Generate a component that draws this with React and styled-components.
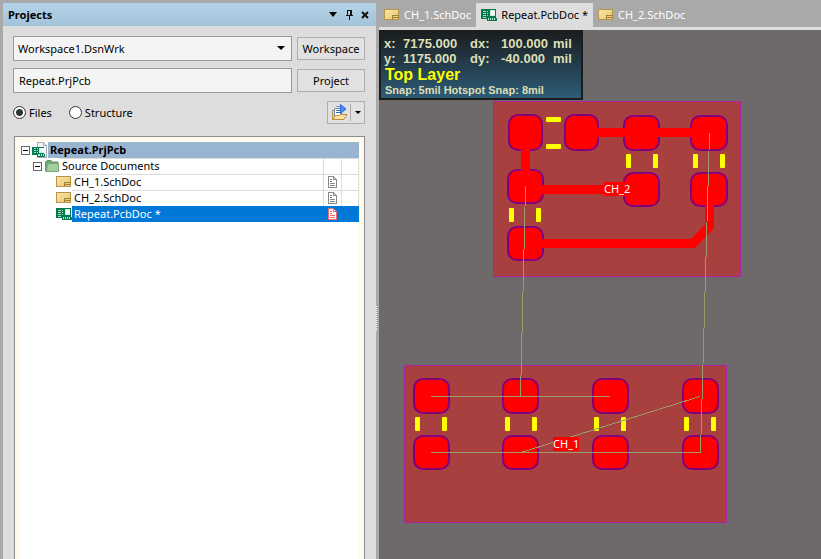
import React, { useState } from "react";
import styled, { createGlobalStyle, css } from "styled-components";

const GlobalStyle = createGlobalStyle`
  *, *::before, *::after { box-sizing: border-box; }
  body { margin: 0; background: #a9a9a9; }
  body, button, input, select {
    font: 11px/16px "Noto Sans", "Open Sans", sans-serif;
    color: #000;
  }
`;

const Shell = styled.div`
  display: flex;
  min-height: 100vh;
  padding: 3px 0 0 3px;
  background: #a9a9a9;
`;

const Panel = styled.aside`
  flex: 0 0 373px;
  display: flex;
  flex-direction: column;
  background: #dddddd;
`;

const PanelHeader = styled.header`
  display: flex;
  align-items: center;
  height: 23px;
  padding: 0 3px 0 5px;
  background: linear-gradient(#b5d3e8, #a3c3d9);
`;

const PanelTitle = styled.h1`
  flex: 1;
  margin: 0;
  font-size: 11px;
  line-height: 16px;
`;

const HeaderButton = styled.button`
  display: flex;
  justify-content: center;
  align-items: center;
  width: 16px;
  height: 16px;
  padding: 0;
  border: 0;
  background: none;
`;

const Controls = styled.form`
  display: grid;
  grid-template-columns: 1fr 68px;
  gap: 7px 5px;
  padding: 10px 11px 0 10px;
`;

const fieldBox = css`
  width: 100%;
  height: 25px;
  border: 1px solid #9a9a9a;
  border-radius: 0;
  background: #f4f4f4;
`;

const SelectWrap = styled.div`
  position: relative;
  svg {
    position: absolute;
    right: 7px;
    top: 10px;
    pointer-events: none;
  }
`;

const WorkspaceSelect = styled.select`
  ${fieldBox}
  padding: 0 24px 0 4px;
  appearance: none;
`;

const ProjectInput = styled.input`
  ${fieldBox}
  padding: 0 5px;
`;

const PushButton = styled.button`
  align-self: center;
  height: 23px;
  padding: 0;
  border: 1px solid #adadad;
  background: #e1e1e1;
`;

const ViewOptions = styled.div`
  display: flex;
  align-items: center;
  gap: 17px;
  height: 23px;
  padding: 0 11px 0 10px;
  margin-top: 8px;
`;

const RadioLabel = styled.label`
  display: flex;
  align-items: center;
  gap: 3px;
`;

const Radio = styled.input`
  appearance: none;
  width: 13px;
  height: 13px;
  margin: 0;
  border: 1px solid #333;
  border-radius: 50%;
  background: #fff;
  &:checked {
    background: radial-gradient(circle, #333 3px, #fff 4px);
  }
`;

const SplitButton = styled.div`
  display: flex;
  margin-left: auto;
  width: 38px;
  height: 23px;
  border: 1px solid #adadad;
  background: #e1e1e1;
`;

const SplitPart = styled.button`
  display: flex;
  align-items: center;
  justify-content: center;
  flex: ${(p) => (p.$main ? "1" : "0 0 14px")};
  padding: 0;
  border: 0;
  border-left: ${(p) => (p.$main ? "0" : "1px solid #adadad")};
  margin: ${(p) => (p.$main ? "0" : "2px 0")};
  background: none;
`;

const TreeFrame = styled.section`
  flex: 1;
  display: flex;
  margin: 12px 11px 0 11px;
  padding: 5px 5px 0;
  border: 1px solid #8c8c8c;
  border-bottom: 0;
  background: #fff9ee;
`;

const TreeBody = styled.div`
  flex: 1;
  background: #fff;
`;

const TreeTable = styled.table`
  width: 100%;
  border-collapse: collapse;
  table-layout: fixed;
`;

const NameCol = styled.col``;
const StateCol = styled.col`
  width: ${(p) => p.$width}px;
`;

const tones = { project: "#99b4d1", selected: "#0078d7" };

const Row = styled.tr`
  height: 16px;
  color: ${(p) => (p.$tone === "selected" ? "#fff" : "#000")};
  font-weight: ${(p) => (p.$tone === "project" ? "bold" : "normal")};
`;

const Cell = styled.td`
  height: 16px;
  padding: 0;
  background: ${(p) => tones[p.$tone] || "#fff"};
  box-shadow: ${(p) => (p.$tone ? "none" : "inset 1px 1px #dcdcdc")};
  &:last-child {
    box-shadow: ${(p) => (p.$tone ? "none" : "inset 1px 1px #dcdcdc, inset -1px 0 #dcdcdc")};
  }
  svg { display: block; margin: 0 auto; }
`;

const NameCell = styled.td`
  padding: 0;
`;

const NameLine = styled.div`
  display: flex;
  align-items: stretch;
  height: 16px;
  padding-left: ${(p) => p.$depth * 12 + 1}px;
`;

const Toggle = styled.button`
  align-self: center;
  display: flex;
  width: 9px;
  height: 9px;
  margin-right: 2px;
  padding: 0;
  border: 0;
  background: none;
`;

const ToggleGap = styled.span`
  width: 11px;
`;

const RowText = styled.span`
  flex: 1;
  padding-left: 2px;
  background: ${(p) => tones[p.$tone] || "#fff"};
  box-shadow: ${(p) => (p.$tone ? "none" : "inset 0 1px #dcdcdc")};
  white-space: nowrap;
`;

const Splitter = styled.div`
  flex: 0 0 3px;
  display: flex;
  align-items: center;
  margin-top: 75px;
`;

const Grip = styled.div`
  width: 1px;
  height: 26px;
  background: repeating-linear-gradient(#fff 0 1px, #a9a9a9 1px 2px);
`;

const Editor = styled.main`
  flex: 1;
  min-width: 0;
  display: flex;
  flex-direction: column;
`;

const TabBar = styled.nav`
  display: flex;
  height: 27px;
  border-bottom: 3px solid #dddddd;
`;

const Tab = styled.button`
  display: flex;
  align-items: center;
  gap: 4px;
  padding: 0 5px;
  border: 0;
  background: ${(p) => (p.$active ? "#dddddd" : "transparent")};
  color: ${(p) => (p.$active ? "#000" : "#fff")};
  white-space: nowrap;
`;

const Canvas = styled.div`
  position: relative;
  flex: 1;
  display: flex;
  overflow: hidden;
  background: #6e6a69;
`;

const Board = styled.svg`
  flex: 1;
  font: 11px "Noto Sans", sans-serif;
`;

const Hud = styled.div`
  position: absolute;
  top: 0;
  left: 0;
  width: 204px;
  padding: 6px 0 0 3px;
  border: 2px solid #1a1c1d;
  border-top: 0;
  background: linear-gradient(#1a1c1d, #2d5c78);
  color: #dedfb5;
  font: bold 13px/15px "Liberation Sans", Arial, sans-serif;
`;

const HudGrid = styled.div`
  display: grid;
  grid-template-columns: 19px 67px 31px 52px auto;
`;

const HudLayer = styled.div`
  font-size: 16px;
  line-height: 17px;
  color: #ffff00;
  padding-left: 1px;
`;

const HudSnap = styled.div`
  font-size: 11px;
  line-height: 15px;
  padding-left: 1px;
`;

const Caret = ({ w = 7, h = 4 }) => (
  <svg width={w} height={h} viewBox="0 0 8 4" preserveAspectRatio="none" aria-hidden="true">
    <path d="M0 0h8L4 4z" fill="#000" />
  </svg>
);

const PinIcon = () => (
  <svg width="9" height="10" viewBox="0 0 9 10" shapeRendering="crispEdges" aria-hidden="true">
    <path d="M2 0h5v5h1v1H5v4H4V6H1V5h1zM3 1v4h2V1z" fill="#111" fillRule="evenodd" />
  </svg>
);

const CloseIcon = () => (
  <svg width="8" height="8" viewBox="0 0 8 8" aria-hidden="true">
    <path d="M1 1l6 6M7 1L1 7" stroke="#111" strokeWidth="2" />
  </svg>
);

const MinusBox = () => (
  <svg width="9" height="9" viewBox="0 0 9 9" shapeRendering="crispEdges" aria-hidden="true">
    <path d="M.5.5h8v8h-8z" fill="#fff" stroke="#666" />
    <path d="M2 4h5v1H2z" fill="#000" />
  </svg>
);

const SchIcon = () => (
  <svg width="16" height="16" viewBox="0 0 16 16" shapeRendering="crispEdges" aria-hidden="true">
    <defs>
      <linearGradient id="sheet" x1="0" y1="0" x2="1" y2="1">
        <stop offset="0" stopColor="#fbe7ae" />
        <stop offset="1" stopColor="#e8c766" />
      </linearGradient>
    </defs>
    <path d="M.5 2.500h14v10H.5z" fill="url(#sheet)" stroke="#b4954a" />
    <path d="M8.500 12.500v-4h6M8.500 10.500h6" fill="none" stroke="#a08138" />
  </svg>
);

const PcbShape = () => (
  <>
    <path d="M0 2h15v9h1v3H6v-2H0z" fill="#067a4c" />
    <path d="M2 4h3v1H2zM2 6h3v1H2zM2 8h3v1H2zM2 10h3v1H2zM6 4h1v1H6zM6 6h1v1H6zM6 8h1v1H6z" fill="#a5dcc4" />
    <path d="M9 3h5v6H9z" fill="#cfeadd" />
    <path d="M10 4h4v4h-4z" fill="#f4fbf7" />
    <path d="M7 11h1v2H7zM9 11h1v2H9zM11 11h1v2h-1zM13 11h1v2h-1z" fill="#b5e3cf" />
  </>
);

const PcbIcon = () => (
  <svg width="16" height="16" viewBox="0 0 16 16" shapeRendering="crispEdges" aria-hidden="true">
    <PcbShape />
  </svg>
);

const ProjectIcon = () => (
  <svg width="16" height="16" viewBox="0 0 16 16" shapeRendering="crispEdges" aria-hidden="true">
    <path d="M5.500 .5h6l3 3v12h-9z" fill="#f4f5fb" stroke="#a7aec4" />
    <path d="M11.500 .5v3h3" fill="none" stroke="#a7aec4" />
    <g transform="translate(0 3) scale(.83 .86)">
      <PcbShape />
    </g>
  </svg>
);

const FolderIcon = () => (
  <svg width="16" height="16" viewBox="0 0 16 16" aria-hidden="true">
    <path d="M1.500 13V4l1.500-1.500h4L8.500 4H14v9.500H2z" fill="#6fa873" stroke="#6a8f6c" />
    <path d="M2.500 13.500L3.500 5.500h11v8z" fill="#a3cf9f" stroke="#7ca57b" />
  </svg>
);

const PageIcon = ({ color = "#8a8a8a" }) => (
  <svg width="9" height="12" viewBox="0 0 9 12" shapeRendering="crispEdges" aria-hidden="true">
    <path d="M.5.5h5l3 3v8h-8z" fill="#fff" stroke={color} />
    <path d="M5 1h1v3H5zM6 3h2v1H6zM2 3h2v1H2zM2 5h2v1H2zM2 7h5v1H2zM2 9h5v1H2z" fill={color} />
  </svg>
);

const OpenIcon = () => (
  <svg width="17" height="17" viewBox="0 0 17 17" aria-hidden="true">
    <path d="M1.500 15.500v-9h3v5z" fill="#f5d893" stroke="#b98f42" />
    <path d="M3.500 4.500h7v8h-7z" fill="#fff" stroke="#6e8fb5" />
    <path d="M5.500 2.500h4v8" fill="none" stroke="#6e8fb5" />
    <path d="M5 6.500h4M5 8.500h5" stroke="#3b6fb0" />
    <path d="M9.500 .5L15 5 9.500 9.500z" fill="#4a90f2" stroke="#2b6ad8" />
    <path d="M1.500 15.500l3-4h4l1-1h6.500l-3 5z" fill="#fbdfa3" stroke="#b98f42" />
  </svg>
);

const rows = [
  { name: "Repeat.PrjPcb", depth: 0, icon: ProjectIcon, toggle: true, tone: "project" },
  { name: "Source Documents", depth: 1, icon: FolderIcon, toggle: true },
  { name: "CH_1.SchDoc", depth: 2, icon: SchIcon, state: "#8a8a8a" },
  { name: "CH_2.SchDoc", depth: 2, icon: SchIcon, state: "#8a8a8a" },
  { name: "Repeat.PcbDoc *", depth: 2, icon: PcbIcon, state: "#ee6a6a", tone: "selected" },
];

const tabs = [
  { name: "CH_1.SchDoc", icon: SchIcon },
  { name: "Repeat.PcbDoc *", icon: PcbIcon, active: true },
  { name: "CH_2.SchDoc", icon: SchIcon },
];

// Each pad is left, top, width, height.
const pads = [
  [130, 85, 33, 35], [186, 85, 33, 35], [245, 86, 35, 34], [312, 86, 36, 34],
  [129, 140, 35, 33], [245, 143, 35, 33], [312, 143, 36, 33], [129, 197, 35, 33],
  ...[35, 124, 214, 304].flatMap((x) => [[x, 349, 35, 34], [x, 406, 35, 33]]),
];

const silk = [
  [247, 124], [274, 124], [314, 124], [341, 124], [130, 178], [157, 178],
  ...[36, 63, 126, 153, 215, 242, 305, 332].map((x) => [x, 387]),
];

function PcbDrawing() {
  return (
    <Board role="img" aria-label="PCB layout with rooms CH_1 and CH_2">
      <g fill="#a84040" stroke="#b023a0" shapeRendering="crispEdges">
        <path d="M114.500 71.500h247v175h-247z" />
        <path d="M25.500 335.500h322v157h-322z" />
      </g>
      <g fill="#ff0000" stroke="#80007f" strokeWidth="2">
        {pads.map(([x, y, w, h]) => (
          <rect key={`${x}-${y}`} x={x} y={y} width={w} height={h} rx="9" />
        ))}
      </g>
      <g fill="none" stroke="#ff0000" strokeWidth="9">
        <path d="M202 102.500h128M146.500 102v55M146 159.500h116M146 213.500h168l16.500-17v-37" />
      </g>
      <g fill="#ffff00">
        {silk.map(([x, y]) => (
          <rect key={`${x}-${y}`} x={x} y={y} width="5" height="14" rx="1" />
        ))}
        <rect x="167" y="87" width="15" height="5" rx="1" />
        <rect x="167" y="114" width="15" height="5" rx="1" />
      </g>
      <g fill="none" stroke="#9a9a6c" shapeRendering="crispEdges">
        <path d="M146.500 156L141.500 366.500M330.500 103L321.500 422.500M52 366.500h179M52 422.500h270M142 422.500L321 366.500" />
      </g>
      <g fill="#ff0000">
        <path d="M225 152h27v14h-27zM174 407h26v14h-26z" />
      </g>
      <g fill="#fff">
        <text x="225" y="163">CH_2</text>
        <text x="174" y="418">CH_1</text>
      </g>
    </Board>
  );
}

export default function App() {
  const [view, setView] = useState("files");
  return (
    <>
      <GlobalStyle />
      <Shell>
        <Panel>
          <PanelHeader>
            <PanelTitle>Projects</PanelTitle>
            <HeaderButton aria-label="Panel menu"><Caret w={8} h={5} /></HeaderButton>
            <HeaderButton aria-label="Pin panel"><PinIcon /></HeaderButton>
            <HeaderButton aria-label="Close panel"><CloseIcon /></HeaderButton>
          </PanelHeader>
          <Controls onSubmit={(e) => e.preventDefault()}>
            <SelectWrap>
              <WorkspaceSelect aria-label="Workspace file">
                <option>Workspace1.DsnWrk</option>
              </WorkspaceSelect>
              <Caret w={8} h={4} />
            </SelectWrap>
            <PushButton type="button">Workspace</PushButton>
            <ProjectInput aria-label="Project file" defaultValue="Repeat.PrjPcb" />
            <PushButton type="button">Project</PushButton>
          </Controls>
          <ViewOptions>
            <RadioLabel>
              <Radio type="radio" name="view" checked={view === "files"} onChange={() => setView("files")} />
              Files
            </RadioLabel>
            <RadioLabel>
              <Radio type="radio" name="view" checked={view === "structure"} onChange={() => setView("structure")} />
              Structure
            </RadioLabel>
            <SplitButton>
              <SplitPart $main aria-label="Open document"><OpenIcon /></SplitPart>
              <SplitPart aria-label="Open options"><Caret w={6} h={3} /></SplitPart>
            </SplitButton>
          </ViewOptions>
          <TreeFrame>
            <TreeBody>
              <TreeTable aria-label="Project documents">
                <colgroup>
                  <NameCol />
                  <StateCol $width={18} />
                  <StateCol $width={18} />
                </colgroup>
                <tbody>
                  {rows.map(({ name, depth, icon: Icon, toggle, tone, state }) => (
                    <Row key={name} $tone={tone}>
                      <NameCell>
                        <NameLine $depth={depth}>
                          {toggle ? <Toggle aria-label={`Collapse ${name}`}><MinusBox /></Toggle> : <ToggleGap />}
                          <Icon />
                          <RowText $tone={tone}>{name}</RowText>
                        </NameLine>
                      </NameCell>
                      <Cell $tone={tone}>{state && <PageIcon color={state} />}</Cell>
                      <Cell $tone={tone} />
                    </Row>
                  ))}
                </tbody>
              </TreeTable>
            </TreeBody>
          </TreeFrame>
        </Panel>
        <Splitter><Grip /></Splitter>
        <Editor>
          <TabBar aria-label="Open documents">
            {tabs.map(({ name, icon: Icon, active }) => (
              <Tab key={name} $active={active}><Icon />{name}</Tab>
            ))}
          </TabBar>
          <Canvas>
            <PcbDrawing />
            <Hud>
              <HudGrid>
                <span>x:</span><span>7175.000</span><span>dx:</span><span>100.000</span><span>mil</span>
                <span>y:</span><span>1175.000</span><span>dy:</span><span>-40.000</span><span>mil</span>
              </HudGrid>
              <HudLayer>Top Layer</HudLayer>
              <HudSnap>Snap: 5mil Hotspot Snap: 8mil</HudSnap>
            </Hud>
          </Canvas>
        </Editor>
      </Shell>
    </>
  );
}
